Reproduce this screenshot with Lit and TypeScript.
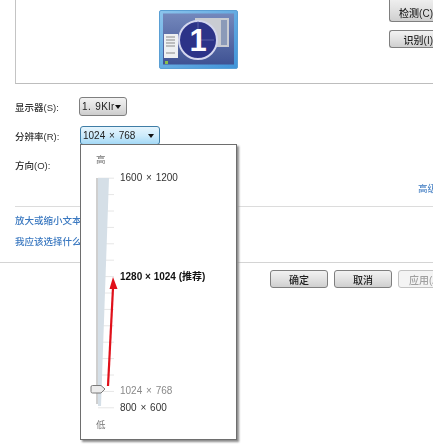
import { LitElement, html, css, svg } from "lit";
import { customElement } from "lit/decorators.js";

const LEVELS: { row: number; text: string; kind: string }[] = [
  { row: 1, text: "1600 × 1200", kind: "" },
  { row: 7, text: "1280 × 1024 (推荐)", kind: "bold" },
  { row: 14, text: "1024 × 768", kind: "muted" },
  { row: 15, text: "800 × 600", kind: "" },
];

const ticks = Array.from({ length: 15 }, (_, i) => 8.2 + i * 16.4);

@customElement("app-root")
export class AppRoot extends LitElement {
  static styles = css`
    :host {
      display: block;
      width: 437px;
      height: 444px;
      background: #fff;
      font-family: "Liberation Sans", "Noto Sans CJK SC", sans-serif;
      font-size: 10px;
      color: #333;
      overflow: hidden;
    }
    .page {
      position: relative;
      width: 433px;
      height: 444px;
      overflow: hidden;
      filter: blur(0.2px);
    }
    .top {
      display: flex;
      justify-content: space-between;
      height: 83px;
      margin-left: 15px;
      border-left: 1px solid #c4c4c4;
      border-bottom: 1px solid #bdbdbd;
      overflow: hidden;
    }
    .monitor {
      display: block;
      width: 80px;
      height: 60px;
      margin: 10px 0 0 143px;
    }
    .side {
      display: flex;
      flex-direction: column;
      gap: 8px;
      margin-top: -4px;
      width: 44px;
    }
    .btn {
      display: flex;
      align-items: center;
      justify-content: center;
      box-sizing: border-box;
      height: 18px;
      border: 1px solid #7f7f7f;
      border-radius: 3px;
      background: linear-gradient(#f2f2f2, #e2e2e2 50%, #cfcfcf);
      color: #222;
      font-size: 10px;
      font-weight: 500;
      white-space: nowrap;
    }
    .side .btn {
      width: 52px;
      padding-right: 8px;
      justify-content: flex-end;
      border-right: none;
      border-radius: 3px 0 0 3px;
    }
    .side .btn:first-child {
      height: 26px;
      align-items: flex-end;
      padding-bottom: 1px;
    }
    .form {
      display: flex;
      flex-direction: column;
      margin: 13px 0 0 15px;
    }
    .row {
      display: flex;
      align-items: center;
      height: 19px;
      margin-bottom: 10px;
    }
    .label {
      width: 64px;
      font-size: 9.5px;
      font-weight: 500;
    }
    .select {
      display: flex;
      align-items: center;
      justify-content: space-between;
      box-sizing: border-box;
      height: 19px;
      padding: 0 5px 0 2px;
      border: 1px solid #7f7f7f;
      border-radius: 3px;
      background: linear-gradient(#f2f2f2, #e2e2e2 50%, #cdcdcd);
      color: #222;
      font-size: 10px;
      word-spacing: 1px;
    }
    .select.narrow {
      width: 48px;
      letter-spacing: 0.4px;
    }
    .select.open {
      width: 80px;
      margin-left: 1px;
      border-color: #3f7da6;
      background: linear-gradient(#e6f5fd, #cdebfb 50%, #a4d9f6);
    }
    .caret {
      width: 0;
      height: 0;
      border-left: 3.5px solid transparent;
      border-right: 3.5px solid transparent;
      border-top: 4px solid #111;
    }
    .advanced {
      display: flex;
      justify-content: flex-end;
      height: 12px;
      margin: -1px 0 0;
      line-height: 12px;
      color: #3a78c0;
      font-size: 9.5px;
      overflow: hidden;
    }
    .advanced span {
      width: 15px;
      overflow: hidden;
      white-space: nowrap;
    }
    .links {
      display: flex;
      flex-direction: column;
      gap: 9px;
      margin: 11px 0 0 15px;
      padding-top: 8px;
      border-top: 1px solid #dcdcdc;
      color: #3a78c0;
      font-size: 9.5px;
      font-weight: 500;
      line-height: 12px;
    }
    .foot {
      display: flex;
      gap: 6px;
      margin-top: 14px;
      padding: 7px 0 0 270px;
      border-top: 1px solid #d4d4d4;
    }
    .foot .btn {
      flex: none;
      width: 58px;
    }
    .foot .btn.off {
      justify-content: flex-start;
      padding-left: 10px;
      border-color: #c2c2c2;
      background: #f4f4f4;
      color: #a0a0a0;
    }
    .popup {
      position: absolute;
      left: 80px;
      top: 144px;
      box-sizing: border-box;
      width: 157px;
      height: 296px;
      display: flex;
      flex-direction: column;
      padding-top: 9px;
      background: #fff;
      border: 1px solid #6e6e6e;
      box-shadow: 2px 2px 2px #8c8c8c;
    }
    .end {
      height: 12px;
      line-height: 12px;
      margin-left: 15px;
      color: #777;
      font-size: 9.5px;
    }
    .body {
      position: relative;
      display: flex;
      height: 246px;
      margin: 4px 0 3px;
    }
    .scale {
      display: block;
      flex: none;
      width: 39px;
      height: 246px;
    }
    .levels {
      display: grid;
      grid-template-rows: repeat(15, 16.4px);
      height: 246px;
    }
    .level {
      align-self: center;
      line-height: 12px;
      font-size: 10px;
      word-spacing: 1px;
      color: #333;
      white-space: nowrap;
    }
    .level.bold {
      font-weight: 700;
      font-size: 10px;
      word-spacing: 0;
      color: #111;
    }
    .level.muted {
      color: #8a8a8a;
    }
    .arrow {
      position: absolute;
      left: 0;
      top: 0;
      width: 39px;
      height: 246px;
      pointer-events: none;
    }
  `;

  private monitor() {
    return html`<svg class="monitor" viewBox="0 0 80 60">
      <defs>
        <linearGradient id="frame" x1="0" y1="0" x2="1" y2="1">
          <stop offset="0" stop-color="#8cc4ec" />
          <stop offset="1" stop-color="#3f93d8" />
        </linearGradient>
        <linearGradient id="wall" x1="0" y1="0" x2="0" y2="1">
          <stop offset="0" stop-color="#7488bc" />
          <stop offset="1" stop-color="#3f5293" />
        </linearGradient>
      </defs>
      <rect x="0.5" y="0.5" width="78" height="58" rx="1.5" fill="url(#frame)" stroke="#5a9fd4" />
      <rect x="4" y="3.5" width="71" height="51" fill="url(#wall)" />
      <rect x="36" y="8" width="34" height="29" fill="#c9ccd2" />
      <rect x="62" y="10" width="6" height="25" fill="#8b9ab8" />
      <rect x="5" y="24" width="14" height="24" fill="#eef0f2" />
      <path d="M7 27h9M7 30h9M7 33h9M7 36h9M7 43h9" stroke="#8a8a8a" stroke-width="1" />
      <rect x="6" y="51" width="3" height="3" fill="#8cbf4a" />
      <circle cx="39" cy="30" r="19" fill="#2c3388" stroke="#d3d6ee" stroke-width="2" />
      <path d="M39 11v19h16" fill="none" stroke="#6c74b4" stroke-width="1" opacity="0.7" />
      <text x="39" y="41" text-anchor="middle" font-family="Liberation Sans" font-weight="700" font-size="31" fill="#fff">1</text>
    </svg>`;
  }

  private scale() {
    return html`<svg class="scale" viewBox="0 0 39 246">
      ${ticks.map(
        (y) => svg`<line x1="17" y1=${y} x2="33" y2=${y} stroke="#e6e6e6" stroke-width="1" />`
      )}
      <polygon points="17,8 28,8 20,236 17,236" fill="#d5dfe7" />
      <rect x="15" y="8" width="2" height="226" fill="#cfcfcf" />
      <path
        d="M11.5 215.5h8.5l4 3.5-4 4h-8.5a1.5 1.5 0 0 1-1.5-1.5v-4.5a1.5 1.5 0 0 1 1.5-1.5z"
        fill="#ececec"
        stroke="#7a7a7a"
      />
    </svg>`;
  }

  render() {
    return html`<div class="page">
      <section class="top">
        ${this.monitor()}
        <div class="side">
          <div class="btn">检测(C)</div>
          <div class="btn">识别(I)</div>
        </div>
      </section>
      <section class="form">
        <div class="row">
          <span class="label">显示器(S):</span>
          <div class="select narrow">1. 9Klr<i class="caret"></i></div>
        </div>
        <div class="row">
          <span class="label">分辨率(R):</span>
          <div class="select open">1024 × 768<i class="caret"></i></div>
        </div>
        <div class="row"><span class="label">方向(O):</span></div>
      </section>
      <div class="advanced"><span>高级设置</span></div>
      <section class="links">
        <span>放大或缩小文本和其他项目</span>
        <span>我应该选择什么显示器设置</span>
      </section>
      <footer class="foot">
        <div class="btn">确定</div>
        <div class="btn">取消</div>
        <div class="btn off">应用(A)</div>
      </footer>
      <div class="popup">
        <div class="end">高</div>
        <div class="body">
          ${this.scale()}
          <div class="levels">
            ${LEVELS.map(
              (l) => html`<div class="level ${l.kind}" style="grid-row:${l.row}">${l.text}</div>`
            )}
          </div>
          <svg class="arrow" viewBox="0 0 39 246">
            <path d="M27 216L32 118" stroke="#e0101a" stroke-width="2.2" fill="none" />
            <polygon points="32,107 36.5,119 28.5,119" fill="#e0101a" />
          </svg>
        </div>
        <div class="end">低</div>
      </div>
    </div>`;
  }
}
